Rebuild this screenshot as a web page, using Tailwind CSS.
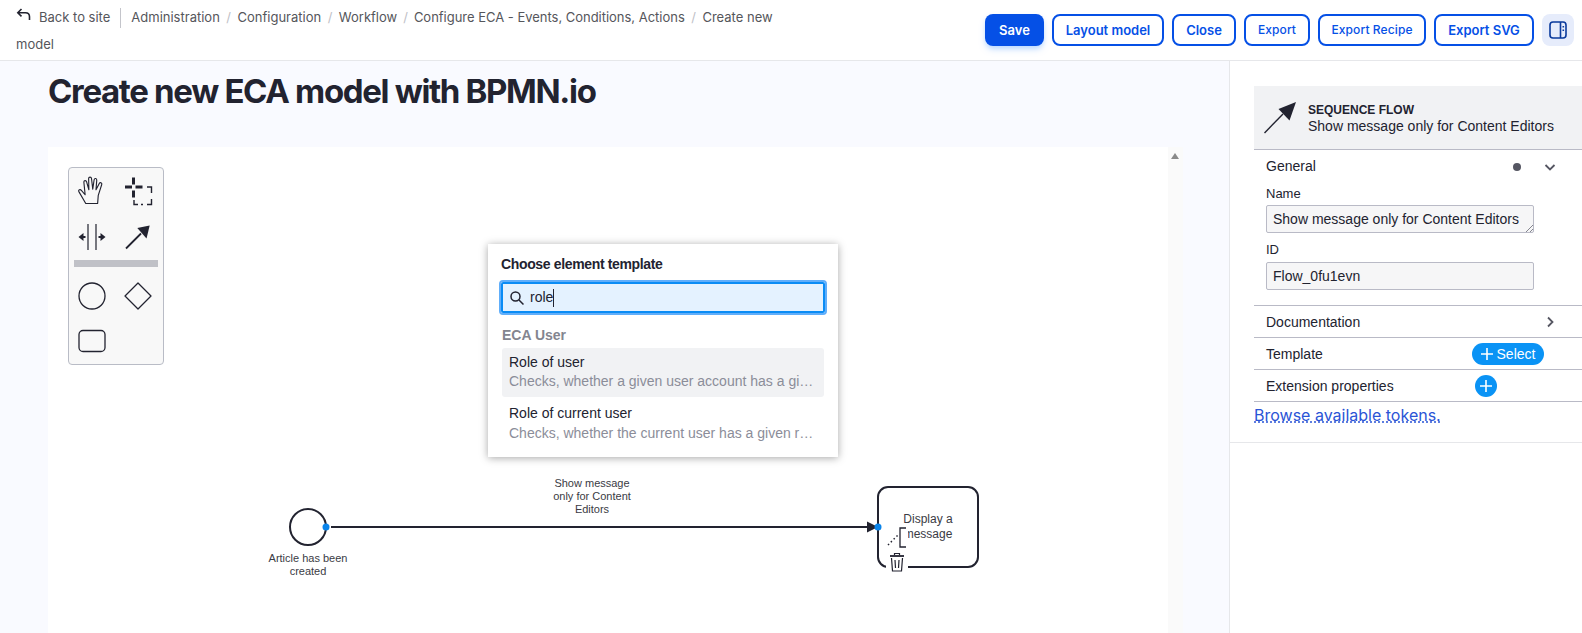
<!DOCTYPE html>
<html lang="en">

<head>
  <meta charset="UTF-8">
  <title>Create new ECA model with BPMN.io</title>
  <script src="https://cdn.jsdelivr.net/npm/@tailwindcss/browser@4"></script>
</head>

<body class="h-[633px] overflow-hidden bg-white font-['Inter',sans-serif] text-[#222330]">
  <!-- Top bar -->
  <header class="flex h-[61px] justify-between border-b border-[#e6e7ea] bg-white pl-4 pr-2">
    <nav class="w-[780px] pt-[4px] text-[13px] leading-[27px] text-[#55565b]">
      <div class="flex items-center">
        <svg class="mr-[7px] mb-[5px] h-4 w-4" viewBox="0 0 16 16" fill="none" stroke="#222330" stroke-width="1.6"><path d="M5.5 2 1.8 5.7l3.7 3.7M2 5.7h7.5c2.5 0 4 1.500 4 4V13" /></svg>
        <span>Back to site</span>
        <span class="mx-[10px] h-5 w-px bg-[#c4c5cb]"></span>
        <span>Administration</span><span class="mx-[6.500px] text-[#c0c1c7]">/</span>
        <span>Configuration</span><span class="mx-[6.500px] text-[#c0c1c7]">/</span>
        <span>Workflow</span><span class="mx-[6px] text-[#c0c1c7]">/</span>
        <span class="tracking-[-0.02px]">Configure ECA - Events, Conditions, Actions</span><span class="mx-[6.500px] text-[#c0c1c7]">/</span>
        <span>Create new</span>
      </div>
      <div>model</div>
    </nav>
    <div class="flex items-start gap-2 pt-[14px] text-[13px] font-semibold text-[#0550e6]">
      <button class="h-8 w-[59px] rounded-lg bg-[#0550e6] pt-[1px] text-white shadow-md shadow-blue-200">Save</button>
      <button class="h-8 w-[112px] rounded-lg border-2 border-[#0550e6] pt-[1px]">Layout model</button>
      <button class="h-8 w-[64px] rounded-lg border-2 border-[#0550e6] pt-[1px]">Close</button>
      <button class="h-8 w-[66px] rounded-lg border-2 border-[#0550e6] pb-[1px] text-[12px] font-medium tracking-[0.1px]">Export</button>
      <button class="h-8 w-[108px] rounded-lg border-2 border-[#0550e6] pb-[1px] text-[12px] font-medium tracking-[0.1px]">Export Recipe</button>
      <button class="h-8 w-[100px] rounded-lg border-2 border-[#0550e6] pt-[1px]">Export SVG</button>
      <button class="flex h-8 w-8 items-center justify-center rounded-lg bg-[#e6ecfb]">
        <svg class="h-[18px] w-[18px]" viewBox="0 0 18 18" fill="none" stroke="#0a3a9c" stroke-width="1.6"><rect x="1" y="1" width="16" height="16" rx="3" /><path d="M11.500 1v16" /><path d="M14.300 5v1.500M14.300 8.500V10" /></svg>
      </button>
    </div>
  </header>

  <div class="flex h-[572px] overflow-hidden">
    <!-- Main -->
    <main class="w-[1229px] shrink-0 bg-[#f9faff] pl-12">
      <h1 class="pt-[10px] text-[33px] leading-10 font-bold tracking-[-1.330px] text-[#222330]">Create new ECA model with BPMN.io</h1>

      <div class="relative mt-[36px] h-[500px] w-[1135px] bg-white font-['Liberation_Sans',sans-serif]">
        <!-- Scrollbar -->
        <div class="absolute top-0 right-0 bottom-0 w-[15px] bg-[#fafafa]">
          <svg class="mt-[6px] ml-[3px] h-[6px] w-2" viewBox="0 0 8 6" fill="#8a8a8a"><path d="M4 0l4 6H0z" /></svg>
        </div>

        <!-- Palette -->
        <div class="absolute top-[20px] left-[20px] grid h-[198px] w-[96px] grid-cols-2 content-start rounded-sm border border-[#b9bcc6] bg-[#f8f8f8] pr-[2px]">
          <div class="flex h-[46px] items-center justify-center">
            <svg class="h-[30px] w-[30px]" viewBox="3 3 24 24" fill="none" stroke="#222330" stroke-width="0.9" stroke-linejoin="round"><path d="M10 25 4.500 15.500c-.7-1.300 1-2.200 2-1l3 3.500L8.500 8c-.2-1.500 1.800-1.800 2.200-.3L12.500 14 12.300 5c0-1.500 2.200-1.500 2.300 0l1 8.500L16.700 6c.3-1.500 2.200-1.200 2.100.3L18.200 14l2.600-5c.7-1.200 2.400-.5 2 .8L20 18.500 19.500 25z" /></svg>
          </div>
          <div class="flex h-[46px] items-center justify-center">
            <svg class="h-[30px] w-[30px]" viewBox="0 0 30 30" fill="none" stroke="#222330"><path d="M10.500 1.500v7M10.500 14.500v7M2 11h7M12.500 11h7" stroke-width="3" /><path d="M24 11h4.500v6M28.500 23v5.500H24M18 28.500h2M11 24v4.500h4" stroke-width="1.400" /></svg>
          </div>
          <div class="flex h-[46px] items-center justify-center">
            <svg class="h-[30px] w-[30px]" viewBox="0 0 30 30" fill="#222330" stroke="#222330"><path d="M11 2v26M19 2v26" stroke-width="1.200" /><path d="M5 15h3.500M21.500 15H25" stroke-width="2" /><path d="M6.500 11v8L1.500 15zM23.500 11v8l5-4z" stroke="none" /></svg>
          </div>
          <div class="flex h-[46px] items-center justify-center">
            <svg class="h-[30px] w-[30px]" viewBox="0 0 30 30" fill="#222330"><path d="M3 26.500 18 11.500" stroke="#222330" stroke-width="1.800" /><path d="M26.700 3.500 23.500 16.500 14.300 6z" /></svg>
          </div>
          <div class="col-span-2 mr-[3px] mb-[5px] ml-[5px] h-[7px] bg-[#c0c1c7]"></div>
          <div class="flex h-[48px] items-center justify-center">
            <svg class="h-[30px] w-[30px]" viewBox="0 0 30 30" fill="none" stroke="#222330" stroke-width="1.300"><circle cx="15" cy="15" r="13" /></svg>
          </div>
          <div class="flex h-[48px] items-center justify-center">
            <svg class="h-[30px] w-[30px]" viewBox="0 0 30 30" fill="none" stroke="#222330" stroke-width="1.300" stroke-linejoin="round"><path d="M15 2 28 15 15 28 2 15z" /></svg>
          </div>
          <div class="flex h-[42px] items-center justify-center">
            <svg class="h-[30px] w-[30px]" viewBox="0 0 30 30" fill="none" stroke="#222330" stroke-width="1.300"><rect x="2" y="4.500" width="26" height="21" rx="4" /></svg>
          </div>
        </div>

        <!-- Diagram -->
        <svg class="absolute top-0 left-0 h-[500px] w-[1120px]" viewBox="48 147 1120 500" fill="none">
          <circle cx="308" cy="527" r="18" stroke="#222330" stroke-width="2" />
          <path d="M331 527H868" stroke="#222330" stroke-width="2" />
          <path d="M867 521.500 878 527 867 532.500z" fill="#222330" />
          <rect x="878" y="487" width="100" height="80" rx="10" fill="#fff" stroke="#222330" stroke-width="2" />
          <circle cx="326" cy="527" r="3.500" fill="#0a84ea" />
          <circle cx="878" cy="527" r="3.500" fill="#0a84ea" />
        </svg>

        <div class="absolute top-[405px] left-[205px] w-[110px] text-center text-[11px] leading-[13px] text-[#3a3b44]">Article has been<br>created</div>
        <div class="absolute top-[330px] left-[489px] w-[110px] text-center text-[11px] leading-[13px] text-[#3a3b44]">Show message<br>only for Content<br>Editors</div>
        <div class="absolute top-[365px] left-[835px] w-[90px] text-center text-[12px] leading-[15px] text-[#3a3b44]">Display a<br>message</div>

        <!-- Context pad -->
        <div class="absolute top-[380px] left-[838px] h-[46px] w-[22px] bg-white">
          <svg class="h-[46px] w-[22px]" viewBox="0 0 22 46" fill="none" stroke="#222330">
            <path d="M2 18 12 8" stroke-width="1.500" stroke-dasharray="1.500 2.500" />
            <path d="M20 1h-6v19h6" stroke-width="1.300" />
            <path d="M4 29h14" stroke-width="1.800" />
            <path d="M8.500 28v-1.500h5V28M5.500 31l1 13h9l1-13M9 33l.5 8M13 33l-.5 8" stroke-width="1.200" />
          </svg>
        </div>

        <!-- Template popup -->
        <div class="absolute top-[97px] left-[440px] h-[213px] w-[350px] bg-white px-[13px] pt-[11px] shadow-[0_1px_8px_rgba(0,0,0,0.35)]">
          <div class="text-[14px] leading-[18px] font-bold tracking-[-0.350px] text-[#222330]">Choose element template</div>
          <div class="mt-[9px] flex h-[31px] items-center rounded-[2px] border-2 border-[#0a8cf5] bg-[#e4f2ff] pl-[6px] text-[14px] text-[#222330] outline-[2px] outline-[#60aefa]">
            <svg class="h-4 w-4" viewBox="0 0 16 16" fill="none" stroke="#222330" stroke-width="1.500"><circle cx="6.500" cy="6.500" r="4.500" /><path d="m10 10 4.500 4.500" /></svg>
            <span class="ml-[5px]">role</span><span class="h-[18px] w-px bg-[#222330]"></span>
          </div>
          <div class="mt-[13px] pl-px text-[14px] leading-[18px] font-bold text-[#83858f]">ECA User</div>
          <div class="mx-px mt-[4px] h-[49px] rounded-[3px] bg-[#f1f2f4] px-[7px] pt-[5px] text-[14px] leading-[19px]">
            <div>Role of user</div>
            <div class="text-[#8b8d99]">Checks, whether a given user account has a gi…</div>
          </div>
          <div class="mx-px mt-[2px] px-[7px] pt-[5px] text-[14px] leading-[19px]">
            <div>Role of current user</div>
            <div class="mt-px text-[#8b8d99]">Checks, whether the current user has a given r…</div>
          </div>
        </div>
      </div>
    </main>

    <!-- Properties panel -->
    <aside class="flex-1 border-l border-[#e6e7ea] bg-white">
      <div class="border-b border-[#e6e7ea] pt-[25px] pl-[24px] font-['Liberation_Sans',sans-serif] text-[14px] text-[#222330]">
        <div class="flex h-[64px] items-center gap-2 border-b border-[#b9bac6] bg-[#f1f2f4] pl-[10px]">
          <svg class="h-9 w-9" viewBox="0 0 36 36" fill="#222330"><path d="M.5 33 19 14" stroke="#222330" stroke-width="1.400" /><path d="M32 2 25.500 20.500 14.500 9z" /></svg>
          <div class="leading-[16px]">
            <div class="text-[12px] font-bold">SEQUENCE FLOW</div>
            <div>Show message only for Content Editors</div>
          </div>
        </div>
        <div class="border-b border-[#b9bac6] pr-[25px] pb-[15px] pl-3">
          <div class="flex h-[31px] items-center justify-between pt-[2px]">
            <span>General</span>
            <span class="flex items-center gap-[23px]">
              <span class="h-2 w-2 rounded-full bg-[#555662]"></span>
              <svg class="mr-[1px] h-3 w-3" viewBox="0 0 12 12" fill="none" stroke="#555662" stroke-width="1.800"><path d="m1.500 4 4.500 4.500L10.500 4" /></svg>
            </span>
          </div>
          <div class="mt-[5px] text-[13px] leading-[15px]">Name</div>
          <div class="relative mt-[4px] flex h-7 w-[268px] items-center rounded-[2px] border border-[#b9bac6] bg-[#f6f6f7] pl-[6px]">Show message only for Content Editors
            <svg class="absolute right-0 bottom-0 h-2 w-2" viewBox="0 0 8 8" stroke="#555662" stroke-width="0.700"><path d="M1 8 8 1M5 8l3-3" /></svg>
          </div>
          <div class="mt-[9px] text-[13px] leading-[15px]">ID</div>
          <div class="mt-[5px] flex h-7 w-[268px] items-center rounded-[2px] border border-[#b9bac6] bg-[#f6f6f7] pl-[6px]">Flow_0fu1evn</div>
        </div>
        <div class="flex h-8 items-center justify-between border-b border-[#b9bac6] pt-[1px] pr-[25px] pl-3">
          <span>Documentation</span>
          <svg class="mr-[1px] h-3 w-3" viewBox="0 0 12 12" fill="none" stroke="#555662" stroke-width="1.800"><path d="m4 1.500 4.500 4.500L4 10.500" /></svg>
        </div>
        <div class="relative flex h-8 items-center border-b border-[#b9bac6] pt-[1px] px-3">
          <span>Template</span>
          <span class="absolute top-[5px] left-[218px] flex h-[22px] w-[72px] items-center justify-center gap-[4px] rounded-full bg-[#0a93f5] text-white">
            <svg class="h-3 w-3" viewBox="0 0 12 12" stroke="#fff" stroke-width="1.600"><path d="M6 0v12M0 6h12" /></svg>Select
          </span>
        </div>
        <div class="relative flex h-8 items-center border-b border-[#b9bac6] pt-[1px] px-3">
          <span>Extension properties</span>
          <span class="absolute top-[5px] left-[221px] flex h-[22px] w-[22px] items-center justify-center rounded-full bg-[#0a93f5]">
            <svg class="h-3 w-3" viewBox="0 0 12 12" stroke="#fff" stroke-width="1.600"><path d="M6 0v12M0 6h12" /></svg>
          </span>
        </div>
        <div class="h-[40px] pt-[1px]">
          <a class="font-['Inter',sans-serif] text-[16px] text-[#2a54d6] underline decoration-dotted" href="#">Browse available tokens.</a>
        </div>
      </div>
    </aside>
  </div>
</body>

</html>
